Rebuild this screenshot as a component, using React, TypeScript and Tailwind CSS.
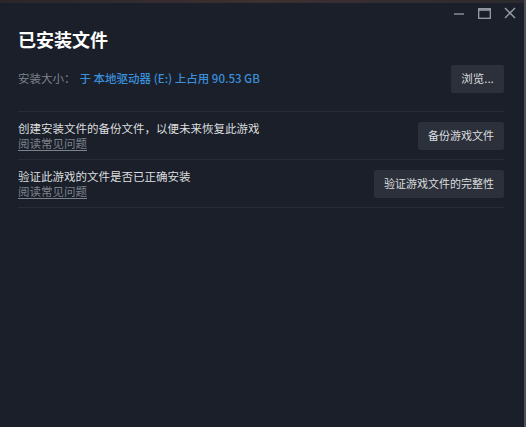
import React from "react";

const font = { fontFamily: '"Noto Sans CJK SC", "Noto Sans", sans-serif' };

function Row({ text, button }: { text: string; button: string }) {
  return (
    <div className="flex items-center justify-between h-[48px] border-b border-[#272c36]">
      <div className="flex flex-col">
        <span className="text-[11.5px] leading-[15px] text-[#dcdedf]">{text}</span>
        <span className="text-[11.5px] leading-[15px] text-[#7d838c] underline underline-offset-2">
          阅读常见问题
        </span>
      </div>
      <button className="h-[28px] px-[10px] bg-[#2b303b] text-[11px] text-[#dcdedf] rounded-[2px]">
        {button}
      </button>
    </div>
  );
}

export default function App() {
  return (
    <div
      className="w-[526px] h-[427px] bg-[#1a1f29] flex flex-col border-r-2 border-[#4d5056]"
      style={font}
    >
      {/* bit of desktop showing through at the top */}
      <div className="h-[3px] bg-gradient-to-r from-[#2a2629] via-[#3b3032] to-[#2c2a2e]" />

      {/* window controls */}
      <div className="h-[20px] flex items-center justify-end gap-[13px] pr-[8px] text-[#9a9ea5]">
        <svg width="12" height="12" viewBox="0 0 12 12">
          <path d="M1 7h10" stroke="currentColor" strokeWidth="1.3" />
        </svg>
        <svg width="13" height="11" viewBox="0 0 13 11">
          <rect x="0.7" y="0.7" width="11.6" height="9.6" fill="none" stroke="currentColor" strokeWidth="1.3" />
          <path d="M0.7 2h11.6" stroke="currentColor" strokeWidth="1.6" />
        </svg>
        <svg width="12" height="12" viewBox="0 0 12 12">
          <path d="M1 1l10 10M11 1L1 11" stroke="currentColor" strokeWidth="1.4" />
        </svg>
      </div>

      <div className="pl-[18px] pr-[20px] flex flex-col">
        <h1 className="mt-[4px] text-[18px] leading-[24px] font-bold text-white">已安装文件</h1>

        <div className="mt-[14px] h-[28px] flex items-center justify-between">
          <div className="text-[11.5px] flex gap-[4px]">
            <span className="text-[#7d838c]">安装大小：</span>
            <span className="text-[#3a8fdb] font-medium">于 本地驱动器 (E:) 上占用 90.53 GB</span>
          </div>
          <button className="h-[28px] w-[53px] bg-[#2b303b] text-[11.5px] text-[#dcdedf] rounded-[2px]">
            浏览...
          </button>
        </div>

        <div className="mt-[18px] border-t border-[#272c36]" />
        <Row text="创建安装文件的备份文件，以便未来恢复此游戏" button="备份游戏文件" />
        <Row text="验证此游戏的文件是否已正确安装" button="验证游戏文件的完整性" />
      </div>
    </div>
  );
}
